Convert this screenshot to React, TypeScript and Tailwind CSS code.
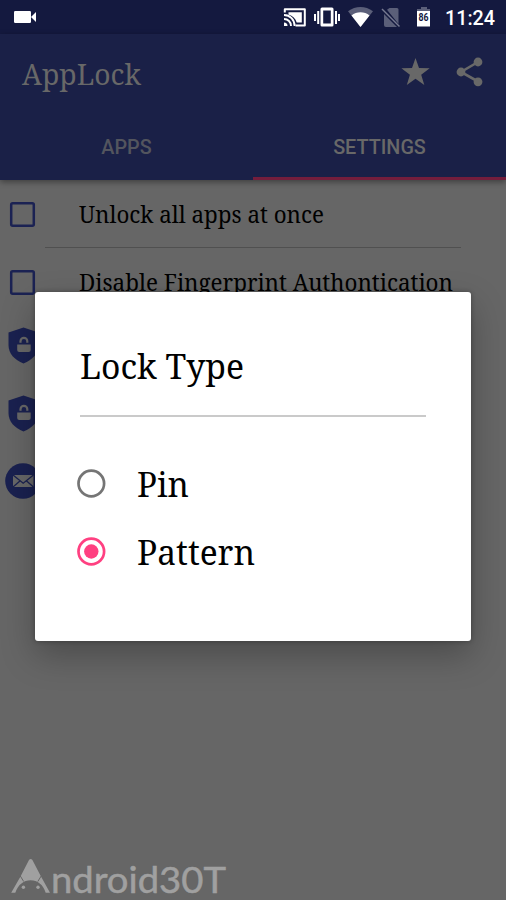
import type { ReactNode } from 'react';

const serif = "font-['Noto_Serif','Droid_Serif','DejaVu_Serif_Condensed','DejaVu_Serif',serif]";

function StatusBar() {
  return (
    <div className="h-[34px] bg-[#14193f] shrink-0">
      <svg className="block" width="506" height="34" viewBox="0 0 506 34" fill="#fff">
        {/* Video camera */}
        <rect x="14" y="11" width="17" height="12" rx="1.2" />
        <path d="M31 17l5-5v10z" />
        {/* Cast */}
        <path d="M284.800 12.500V9.200h20v16.200h-9.300" fill="none" stroke="#fff" strokeWidth="2" strokeLinejoin="round" />
        <path d="M288.500 12.300h13.300v10.200h-5.100c-1.100-4.200-4-7-8.200-8.100z" />
        <path d="M284 15c6 0 10.600 4.800 10.600 11M284 19c4 0 7 3 7 7" fill="none" stroke="#fff" strokeWidth="1.9" />
        <path d="M284 22.500a3.500 3.500 0 0 1 3.500 3.500H284z" />
        {/* Vibrate */}
        <path fillRule="evenodd" d="M322 7.500h10q1.500 0 1.500 1.500v16q0 1.500-1.500 1.500h-10q-1.500 0-1.500-1.500V9q0-1.500 1.500-1.500zm1.200 3v13h7.600v-13z" />
        <path d="M317.200 11h2v13h-2zM314 14h2v7h-2zM335 11h2v13h-2zM338 14h2v7h-2z" />
        {/* Wifi */}
        <path d="M348 11.300C355.500 5.500 365.500 5.500 373 11.300L360.500 27z" fill="#5b5f79" />
        <path d="M351.500 15.500c5-4.300 13-4.300 18 0l-9 11.500z" />
        {/* No sim */}
        <path d="M384 14l13 13H386q-2 0-2-2zM387 9.800L389.500 8H397q1.500 0 1.500 1.500V24z" fill="#5b5f79" />
        <path d="M382 9l17.500 17.500" stroke="#777a91" strokeWidth="1.500" />
        {/* Battery */}
        <path d="M421 7h6v2h3v3h-13V9h4z" fill="#5b5f79" />
        <path d="M417 11h13v15.500h-13z" />
        <text x="423.500" y="21" textAnchor="middle" className="font-['Roboto',sans-serif] text-[10px] font-bold" fill="#14193f" textLength="10" lengthAdjust="spacingAndGlyphs">86</text>
        <text x="445" y="24.500" className="font-['Roboto',sans-serif] text-[20px] font-medium" textLength="50" lengthAdjust="spacingAndGlyphs">11:24</text>
      </svg>
    </div>
  );
}

function Header() {
  return (
    <header className="h-[146px] shrink-0 bg-[#1a2047] flex flex-col shadow-[0_2px_6px_rgba(0,0,0,0.4)] relative">
      <div className="h-[80px] flex items-center pl-[22px] pr-[23px]">
        <h1 className={`${serif} flex-1 pt-[2px] leading-[40px] text-[#686868]`}>
          <FitText width={119} size={29}>AppLock</FitText>
        </h1>
        <svg className="mr-[24px] mt-[-5px]" width="33" height="32" viewBox="0 0 33 32" fill="#686868">
          <path d="M16.500 2.100l3.500 10 10.700.2-8.500 6.400 3.100 10.200-8.800-6.100-8.700 6.100 3.100-10.200-8.500-6.400 10.600-.2z" />
        </svg>
        <svg className="mt-[-4px]" width="27" height="30" viewBox="0 0 27 30" fill="#686868">
          <path d="M22 5L5 15l17 9.500" fill="none" stroke="#686868" strokeWidth="2.600" />
          <circle cx="22" cy="5" r="4.400" />
          <circle cx="5" cy="15" r="4.400" />
          <circle cx="22" cy="24.800" r="4.400" />
        </svg>
      </div>
      <nav className="grid grid-cols-2 h-[66px] font-['Roboto',sans-serif] text-[19.8px] font-medium text-center leading-[68px]">
        <div className="h-[66px] text-[#53555e]">APPS</div>
        <div className="h-[66px] text-[#686868] border-b-[3px] border-[#741d3c]">SETTINGS</div>
      </nav>
    </header>
  );
}

/* Serif label set to a fixed width */
function FitText({ width, size, children }: { width: number; size: number; children: string }) {
  return (
    <svg className="block overflow-visible" width={width} height="40" fill="currentColor">
      <text x="0" y="30" fontSize={size} textLength={width} lengthAdjust="spacingAndGlyphs">{children}</text>
    </svg>
  );
}

function Row({ icon, children }: { icon: ReactNode; children?: ReactNode }) {
  return (
    <div className="h-[68px] flex items-center">
      <div className="w-[79px] shrink-0">{icon}</div>
      <div className={`${serif} text-black`}>{children}</div>
    </div>
  );
}

function Checkbox() {
  return (
    <svg className="ml-[9px]" width="27" height="27" viewBox="0 0 27 27">
      <rect x="2.200" y="2.200" width="22.600" height="22.600" rx="1.500" fill="none" stroke="#1b2253" strokeWidth="2.500" />
    </svg>
  );
}

function ShieldIcon() {
  return (
    <svg className="ml-[8px] mt-[-9px]" width="31" height="37" viewBox="0 0 31 37">
      <path d="M15.500.5l15 5V18c0 8.500-6 15-15 18.500C6.500 33 .5 26.500.5 18V5.500z" fill="#1a2150" />
      <path d="M9.200 17.500h13.500v5.500q0 2-2 2h-9.500q-2 0-2-2z" fill="#686868" />
      <path d="M12.500 15.800v-1.500a3.400 3.400 0 0 1 6.800 0v1.500" fill="none" stroke="#686868" strokeWidth="2.200" />
    </svg>
  );
}

function MailIcon() {
  return (
    <svg className="ml-[5px] mt-[-11px]" width="36" height="36" viewBox="0 0 36 36">
      <circle cx="18" cy="18" r="17.800" fill="#1a2150" />
      <rect x="8" y="12" width="20.500" height="12" fill="#686868" />
      <path d="M8 12l10.200 8.200L28.500 12M8 24l7.200-6.200M28.500 24l-7.200-6.200" fill="none" stroke="#1a2150" strokeWidth="1.300" />
    </svg>
  );
}

function Radio({ label, width, checked }: { label: string; width: number; checked?: boolean }) {
  return (
    <div className="h-[68px] flex items-center">
      <svg width="29" height="29" viewBox="0 0 29 29" fill="none">
        <circle cx="14.300" cy="14.500" r="12.800" stroke={checked ? '#ff4081' : '#757575'} strokeWidth="2.700" />
        {checked && <circle cx="14.300" cy="14.500" r="7.200" fill="#ff4081" />}
      </svg>
      <div className="ml-[31px] mt-[8px]">
        <FitText width={width} size={34}>{label}</FitText>
      </div>
    </div>
  );
}

function LockDialog() {
  return (
    <div className={`${serif} absolute left-[35px] top-[292px] w-[436px] h-[349px] bg-white rounded-[3px] text-black pt-[57px] shadow-[0_14px_34px_rgba(0,0,0,0.27),0_0_5px_rgba(0,0,0,0.3)]`}>
      <div className="mx-[45px] h-[68px] border-b-2 border-[#cacaca]">
        <FitText width={164} size={34}>Lock Type</FitText>
      </div>
      <div className="ml-[42px] mt-[32px]">
        <Radio label="Pin" width={52} />
        <Radio label="Pattern" width={118} checked />
      </div>
    </div>
  );
}

function Watermark() {
  return (
    <svg className="absolute left-[10px] bottom-0" width="220" height="44" viewBox="0 0 220 44" fill="#a0a0a0">
      <path d="M19 4q1.700-2.200 3.400 0L31 20.500l9 16.200h-4.300C33 28.500 27.500 24.300 20.600 24.300S8.300 28.500 5.300 36.700H1.200l9.300-16.200z" />
      <path d="M10.300 20l3.400 5.500M31.200 20l-3.400 5.500" stroke="#666" strokeWidth="1" />
      <circle cx="13.400" cy="31.300" r="1.700" />
      <circle cx="28" cy="31.300" r="1.700" />
      <text x="41" y="36.700" className="font-['Lato',sans-serif] text-[37px]" stroke="#a0a0a0" strokeWidth="0.500" textLength="175" lengthAdjust="spacingAndGlyphs">ndroid30T</text>
    </svg>
  );
}

export default function App() {
  return (
    <div className="relative w-[506px] h-[900px] overflow-hidden bg-[#666] flex flex-col">
      <StatusBar />
      <Header />
      <main>
        <Row icon={<Checkbox />}>
          <div className="-mt-[2px]">
            <FitText width={245} size={23.5}>Unlock all apps at once</FitText>
          </div>
        </Row>
        <div className="mx-[45px] -mt-px h-px bg-[#505050]" />
        <Row icon={<Checkbox />}>
          <div className="-mt-[2px]">
            <FitText width={374} size={23.5}>Disable Fingerprint Authontication</FitText>
          </div>
        </Row>
        <Row icon={<ShieldIcon />} />
        <Row icon={<ShieldIcon />} />
        <Row icon={<MailIcon />} />
      </main>
      <LockDialog />
      <Watermark />
    </div>
  );
}
